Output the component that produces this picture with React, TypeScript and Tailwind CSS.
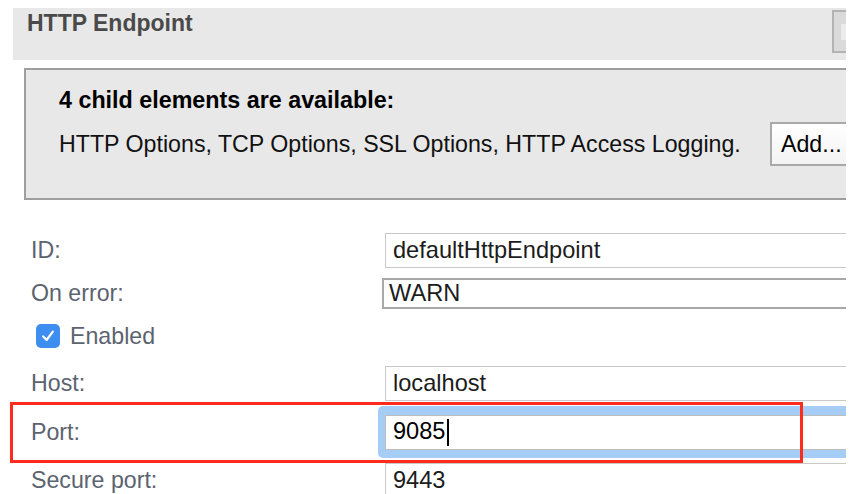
import React from 'react';

const font = { fontFamily: '"Liberation Sans", Arial, sans-serif' };

interface FieldRowProps {
  label: string;
  value: string;
  rowClass: string;
}

// Simple label + text field row
const FieldRow: React.FC<FieldRowProps> = ({ label, value, rowClass }) => (
  <div className={`flex items-center ${rowClass}`}>
    <div className="w-[354px] shrink-0 text-[23.2px] text-[#5c6370]">{label}</div>
    <div className="flex h-[35px] w-[500px] shrink-0 items-center border border-[#c9c9c9] bg-white pl-[7px] text-[23.6px] text-[#1c1c1c]">
      {value}
    </div>
  </div>
);

export default function App() {
  return (
    <div className="relative h-[494px] w-[858px] overflow-hidden bg-white" style={font}>
      <div className="w-[846px] overflow-hidden">
        {/* header band */}
        <div className="ml-[13px] mt-[8px] flex h-[52px] items-start justify-between bg-[#e8e8e8]">
          <div className="pl-[14px] text-[23px] font-bold leading-[30px] text-[#4a4a4a]">HTTP Endpoint</div>
          <div className="mt-[2px] flex h-[43px] w-[14px] items-center border-2 border-r-0 border-[#b3b3b3] bg-[#dadada] pl-[7px]">
            <div className="h-[16px] w-[5px] bg-[#ececec]" />
          </div>
        </div>

        {/* child elements box */}
        <div className="ml-[24px] mt-[8px] h-[132px] w-[840px] border-2 border-r-0 border-[#9e9e9e] bg-[#e8e8e8]">
          <div className="pl-[33px] pt-[16px] text-[23.3px] font-bold leading-[28px] text-black">
            4 child elements are available:
          </div>
          <div className="mt-[8px] flex items-center">
            <div className="w-[744px] shrink-0 pl-[33px] text-[23.2px] text-[#111]">
              HTTP Options, TCP Options, SSL Options, HTTP Access Logging.
            </div>
            <div className="flex h-[44px] w-[100px] shrink-0 items-center border-2 border-[#a9a9a9] bg-gradient-to-b from-white to-[#f3f3f3] pl-[9px] text-[23.2px] text-black">
              Add...
            </div>
          </div>
        </div>

        {/* form */}
        <div className="mt-[33px] pl-[31px]">
          <FieldRow label="ID:" value="defaultHttpEndpoint" rowClass="h-[35px]" />
          <div className="mt-[10px] flex h-[31px] items-center">
            <div className="w-[351px] shrink-0 text-[23.2px] text-[#5c6370]">On error:</div>
            <div className="flex h-[31px] w-[500px] shrink-0 items-center border-2 border-[#a8a8a8] bg-white pl-[5px] text-[23.6px] text-[#1c1c1c]">
              WARN
            </div>
          </div>
          <div className="mt-[15px] flex h-[24px] items-center pl-[5px]">
            <div className="flex h-[24px] w-[24px] items-center justify-center rounded-[5px] bg-[#3d8ef0]">
              <svg width="16" height="16" viewBox="0 0 16 16" fill="none">
                <path d="M3.2 8.4 L6.6 12 L12.8 3.6" stroke="white" strokeWidth="2.2" strokeLinecap="round" strokeLinejoin="round" />
              </svg>
            </div>
            <span className="ml-[10px] text-[23.2px] text-[#5c6370]">Enabled</span>
          </div>
          <FieldRow label="Host:" value="localhost" rowClass="mt-[18px] h-[35px]" />
          <div className="mt-[5px] flex h-[52px] items-center">
            <div className="w-[347px] shrink-0 text-[23.2px] text-[#5c6370]">Port:</div>
            <div className="flex h-[52px] w-[500px] shrink-0 items-center rounded-[5px] bg-[#a5cdf6] pl-[7px]">
              <div className="flex h-[35px] w-full items-center border border-[#bdbdbd] bg-white pl-[7px] text-[23.6px] text-black">
                9085
                <span className="ml-[1px] h-[27px] w-[2px] bg-black" />
              </div>
            </div>
          </div>
          <FieldRow label="Secure port:" value="9443" rowClass="mt-[5px] h-[35px]" />
        </div>
      </div>

      {/* red highlight around the Port row */}
      <div className="pointer-events-none absolute left-[10px] top-[402px] h-[61px] w-[793px] border-[3px] border-[#ff2b1c]" />
    </div>
  );
}
